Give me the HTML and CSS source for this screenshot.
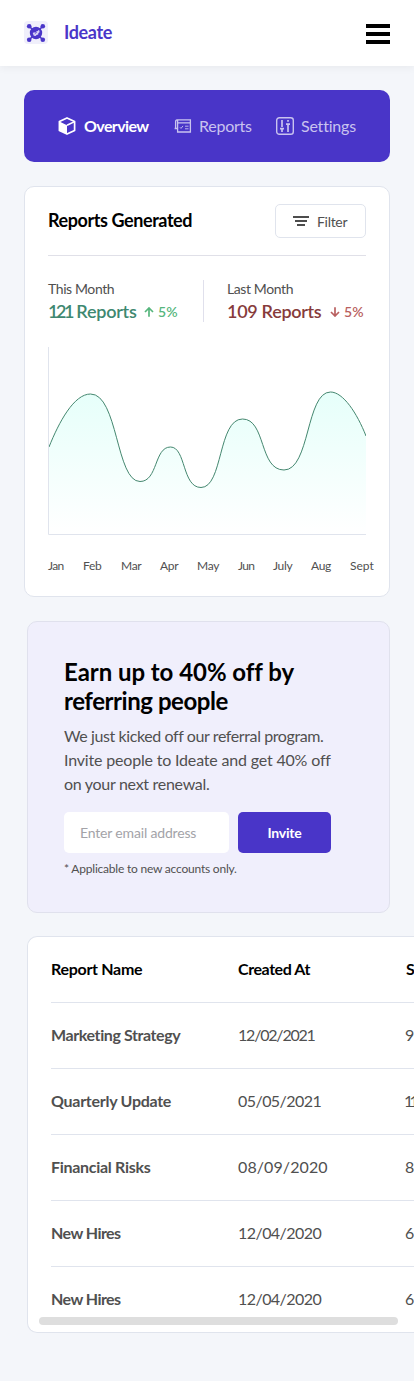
FILE: index.html
```html
<!DOCTYPE html>
<html lang="en">
<head>
<meta charset="utf-8">
<meta name="viewport" content="width=device-width, initial-scale=1">
<title>Ideate</title>
<link rel="stylesheet" href="styles.css">
</head>
<body>
<header class="topbar">
  <div class="brand">
    <svg class="logo" width="24" height="24" viewBox="0 0 24 24">
      <rect y="0" width="24" height="23" rx="4" fill="#f0effb"/>
      <path d="M5 5l14 14M19 5L5 19" stroke="#4a36c9" stroke-width="1.6"/>
      <g fill="#4a36c9"><circle cx="5.2" cy="5.2" r="2.3"/><circle cx="18.8" cy="5.2" r="2.3"/><circle cx="5.2" cy="18.7" r="2.3"/><circle cx="18.8" cy="18.7" r="2.3"/><circle cx="12" cy="12" r="6.2"/></g>
      <path d="M8.700 12l1.500-.8 1 .6 1.300-1.600 1.300-.2.6-1 1.200.8-.2 1.700-1 .6-.2 1.400-1.600.4-1 1.200-1.800-.3z" fill="#d6d0f5"/>
      <path d="M10.800 12.900l2.200-2.100" stroke="#4a36c9" stroke-width=".7"/>
    </svg>
    <span class="brand-name">Ideate</span>
  </div>
  <div class="burger"><i></i><i></i><i></i></div>
</header>
<main class="page">
  <nav class="tabs">
    <a class="tab tab-active"><svg width="18" height="18" viewBox="0 0 18 18"><path d="M9 .9l7.6 3.7v8.8L9 17.1l-7.6-3.7V4.6z" fill="none" stroke="#fff" stroke-width="1.7" stroke-linejoin="round"/><path d="M1.4 4.6L9 8.3v8.8l-7.6-3.7z" fill="#fff"/><path d="M9 8.3l7.6-3.7" stroke="#fff" stroke-width="1.6"/></svg><span class="t-overview">Overview</span></a>
    <a class="tab tab-reports"><svg width="18" height="14" viewBox="0 0 18 14" fill="none" stroke="#c9c3ef" stroke-width="1.3"><path d="M3.6 3.6V13h12.8V.9H3C1.7.9 1.6 2 1.6 3v6.5H.6M3.6 3.9h12.8M3.6 1v3M.6 9.500h3"/><path d="M6 8.3l1 1.1 2-2.5M11 7.2h3.5M11 9.8h3.5" stroke-width=".9"/></svg><span class="t-reports">Reports</span></a>
    <a class="tab tab-settings"><svg width="18" height="18" viewBox="0 0 18 18" fill="none" stroke="#c9c3ef" stroke-width="1.4"><rect x=".7" y=".7" width="16.6" height="16.6" rx="2.6"/><path d="M6 3v7M4 11.7h4M6 12v3M12 3v1.7M10 7.2h4M12 7v8" stroke-width="1.7"/></svg><span class="t-settings">Settings</span></a>
  </nav>

  <section class="card report">
    <div class="report-head">
      <h2 class="report-title">Reports Generated</h2>
      <button class="filter"><svg width="16" height="10" viewBox="0 0 16 10"><path d="M0 1h16M2 5h12M4 9h8" stroke="#4d4d4d" stroke-width="2"/></svg><span class="t-filter">Filter</span></button>
    </div>
    <div class="stats">
      <div class="stat">
        <div class="stat-label">This Month</div>
        <div class="stat-row up"><span class="stat-value"><span class="num">121</span> Reports</span><svg class="arrow" width="10" height="10" viewBox="0 0 10 10"><path d="M5 9.8V1.2M1 5l4-4 4 4" fill="none" stroke="#56b67d" stroke-width="1.7"/></svg><span class="pct">5%</span></div>
      </div>
      <div class="stat stat-last">
        <div class="stat-label">Last Month</div>
        <div class="stat-row down"><span class="stat-value">109 Reports</span><svg class="arrow" width="10" height="10" viewBox="0 0 10 10"><path d="M5 .2v8.6M1 5l4 4 4-4" fill="none" stroke="#b96060" stroke-width="1.7"/></svg><span class="pct">5%</span></div>
      </div>
    </div>
    <svg class="chart" width="318" height="188" viewBox="0 0 318 188">
      <defs><linearGradient id="area" x1="0" y1="0" x2="0" y2="1"><stop offset="0" stop-color="#e6fffa"/><stop offset="1" stop-color="#fff"/></linearGradient></defs>
      <path d="M1 100C11 75 26 47 42.500 47C70 47 68 134.500 92 134.500C110 134.500 106 100 122.500 100C138 100 134 140.500 153 140.500C175 140.500 170 72 194.500 72C218 72 211 123 236 123C262 123 258 45 282.500 45C295 45 309 66 318 89V187H1Z" fill="url(#area)"/>
      <path d="M1 100C11 75 26 47 42.500 47C70 47 68 134.500 92 134.500C110 134.500 106 100 122.500 100C138 100 134 140.500 153 140.500C175 140.500 170 72 194.500 72C218 72 211 123 236 123C262 123 258 45 282.500 45C295 45 309 66 318 89" fill="none" stroke="#44876f" stroke-width="1"/>
      <path d="M.5 0V187.500H318" fill="none" stroke="#e0e4ed"/>
    </svg>
    <div class="months"><span class="tight">Jan</span><span>Feb</span><span>Mar</span><span>Apr</span><span>May</span><span class="tight">Jun</span><span>July</span><span>Aug</span><span class="loose">Sept</span></div>
  </section>

  <section class="card promo">
    <h2 class="promo-title"><span class="t-h1">Earn up to 40% off by</span><br><span class="t-h2">referring people</span></h2>
    <p class="promo-text"><span class="t-p1">We just kicked off our referral program.</span><br><span class="t-p2">Invite people to Ideate and get 40% off</span><br><span class="t-p3">on your next renewal.</span></p>
    <div class="invite">
      <div class="email"><span class="t-email">Enter email address</span></div>
      <button class="invite-btn">Invite</button>
    </div>
    <p class="note"><span class="t-note">* Applicable to new accounts only.</span></p>
  </section>

  <section class="table-card">
    <div class="row head"><span class="t-rn">Report Name</span><span class="t-ca">Created At</span><span class="col-s">S</span></div>
    <div class="row"><b class="t-ms">Marketing Strategy</b><span class="d1">12/02/2021</span><span>9</span></div>
    <div class="row"><b class="t-qu">Quarterly Update</b><span class="d2">05/05/2021</span><span class="eleven">11</span></div>
    <div class="row"><b class="t-fr">Financial Risks</b><span class="d3">08/09/2020</span><span>8</span></div>
    <div class="row"><b class="t-nh">New Hires</b><span class="d2">12/04/2020</span><span>6</span></div>
    <div class="row"><b class="t-nh">New Hires</b><span class="d2">12/04/2020</span><span>6</span></div>
    <div class="scrollbar"></div>
  </section>
</main>
</body>
</html>
```
FILE: styles.css
```css
* { box-sizing: border-box; }
body { margin: 0; background: #f4f6fa; font-family: Lato, sans-serif; font-variant-ligatures: none; color: #505050; overflow-x: hidden; }
h2, p { margin: 0; }
button { font-family: inherit; margin: 0; padding: 0; }
span, b { white-space: nowrap; }
.topbar { height: 66px; background: #fff; box-shadow: 0 2px 8px rgba(0,0,0,.05); display: flex; align-items: center; justify-content: space-between; padding: 0 24px; }
.brand { display: flex; align-items: center; gap: 16px; }
.logo { display: block; }
.brand-name { font-size: 18px; font-weight: 700; line-height: 22px; padding-bottom: 2px; color: #4a36c9; letter-spacing: -.35px; }
.burger { width: 24px; display: grid; gap: 4px; padding-top: 2px; }
.burger i { height: 4px; background: #000; }
.page { padding: 24px 0 48px 24px; }
.tabs { width: 366px; height: 72px; border-radius: 10px; background: #4935c8; display: flex; align-items: center; padding-left: 34px; }
.tab { display: flex; align-items: center; gap: 8px; font-size: 16px; line-height: 24px; color: #c9c3ef; }
.tab-active { color: #fff; font-weight: 700; width: 116px; }
.tab-reports { width: 102px; gap: 7px; }
.tab-settings { gap: 7px; }
.tab svg { flex: none; }
.t-overview { letter-spacing: -.6px; }
.t-reports { letter-spacing: -.25px; }
.t-settings { letter-spacing: -.2px; }
.card { border: 1px solid #e0e4ed; border-radius: 10px; }
.report { width: 366px; height: 411px; margin-top: 24px; background: #fff; padding: 17px 23px 0; }
.report-head { height: 52px; display: flex; justify-content: space-between; align-items: flex-start; border-bottom: 1px solid #e0e0e8; }
.report-title { font-size: 18px; font-weight: 700; color: #000; line-height: 32px; letter-spacing: -.42px; }
.filter { width: 91px; height: 34px; border: 1px solid #e0e4ed; border-radius: 5px; background: #fff; display: flex; align-items: center; padding-left: 17px; gap: 8px; font-size: 14px; line-height: 20px; color: #505050; }
.t-filter { padding-top: 2px; letter-spacing: -.3px; }
.stats { display: flex; height: 42px; margin-top: 24px; }
.stat { width: 155px; height: 42px; }
.stat-last { width: 163px; border-left: 1px solid #e0e0ec; padding-left: 23px; }
.stat-label { font-size: 14px; line-height: 18px; letter-spacing: -.4px; }
.stat-row { display: flex; align-items: center; line-height: 28px; }
.stat-value { font-size: 18px; font-weight: 600; line-height: 26px; padding-bottom: 2px; letter-spacing: -.3px; }
.up .stat-value { width: 96px; color: #3e8870; letter-spacing: -.25px; }
.up .num { letter-spacing: -2.4px; }
.down .stat-value { width: 103px; color: #873b3b; }
.pct { font-size: 14px; font-weight: 600; margin-left: 4px; letter-spacing: .2px; }
.up .pct { color: #56b67d; }
.down .pct { color: #b96060; }
.chart { display: block; margin-top: 25px; }
.months { display: grid; grid-template-columns: 35px 38px 39px 37px 41px 35px 38px 39px 30px; font-size: 12px; line-height: 16px; margin-top: 23px; letter-spacing: -.3px; }
.tight { letter-spacing: -.7px; }
.loose { letter-spacing: 0; }
.promo { width: 363px; height: 292px; margin: 24px 0 0 3px; background: #f0effc; border-color: #e0e1ed; padding: 35px 36px 36px; }
.promo-title { font-size: 24px; font-weight: 700; line-height: 29px; color: #000; }
.t-h1 { letter-spacing: -.05px; }
.t-h2 { letter-spacing: -.45px; }
.promo-text { font-size: 16px; line-height: 24px; margin-top: 9px; }
.t-p1 { letter-spacing: -.4px; }
.t-p2 { letter-spacing: -.18px; }
.t-p3 { letter-spacing: -.29px; }
.invite { display: flex; gap: 9px; margin-top: 16px; }
.email { width: 165px; height: 41px; background: #fff; border-radius: 5px; padding-left: 16px; font-size: 14px; line-height: 42px; color: #a3a3a8; }
.t-email { letter-spacing: -.17px; }
.invite-btn { width: 93px; height: 41px; border: 0; border-radius: 5px; background: #4935c8; color: #fff; font-size: 14px; font-weight: 700; line-height: 42px; letter-spacing: -.25px; }
.note { font-size: 12px; line-height: 16px; margin-top: 8px; }
.t-note { letter-spacing: -.21px; }
.table-card { position: relative; width: 387px; height: 397px; margin: 23px 0 0 3px; background: #fff; border: 1px solid #e0e4ed; border-right: 0; border-radius: 10px 0 0 10px; padding-left: 23px; overflow: hidden; }
.row { height: 66px; padding-bottom: 2px; display: grid; grid-template-columns: 187px 167px 20px; align-items: center; border-bottom: 1px solid #e0e4ed; font-size: 16px; line-height: 24px; }
.row b { font-weight: 700; }
.head { color: #000; font-weight: 700; }
.t-rn { letter-spacing: -.3px; }
.t-ca { letter-spacing: -.43px; }
.col-s { padding-left: 1px; }
.t-ms { letter-spacing: -.4px; }
.t-qu { letter-spacing: -.27px; }
.t-fr { letter-spacing: -.3px; }
.t-nh { letter-spacing: -.55px; }
.d1 { letter-spacing: -1.2px; }
.d2 { letter-spacing: -.55px; }
.d3 { letter-spacing: .1px; }
.eleven { letter-spacing: -3.8px; margin-left: -1px; }
.row:nth-of-type(6) { border-bottom: 0; }
.scrollbar { position: absolute; left: 11px; bottom: 7px; width: 359px; height: 8px; border-radius: 4px; background: #dedede; }
```
